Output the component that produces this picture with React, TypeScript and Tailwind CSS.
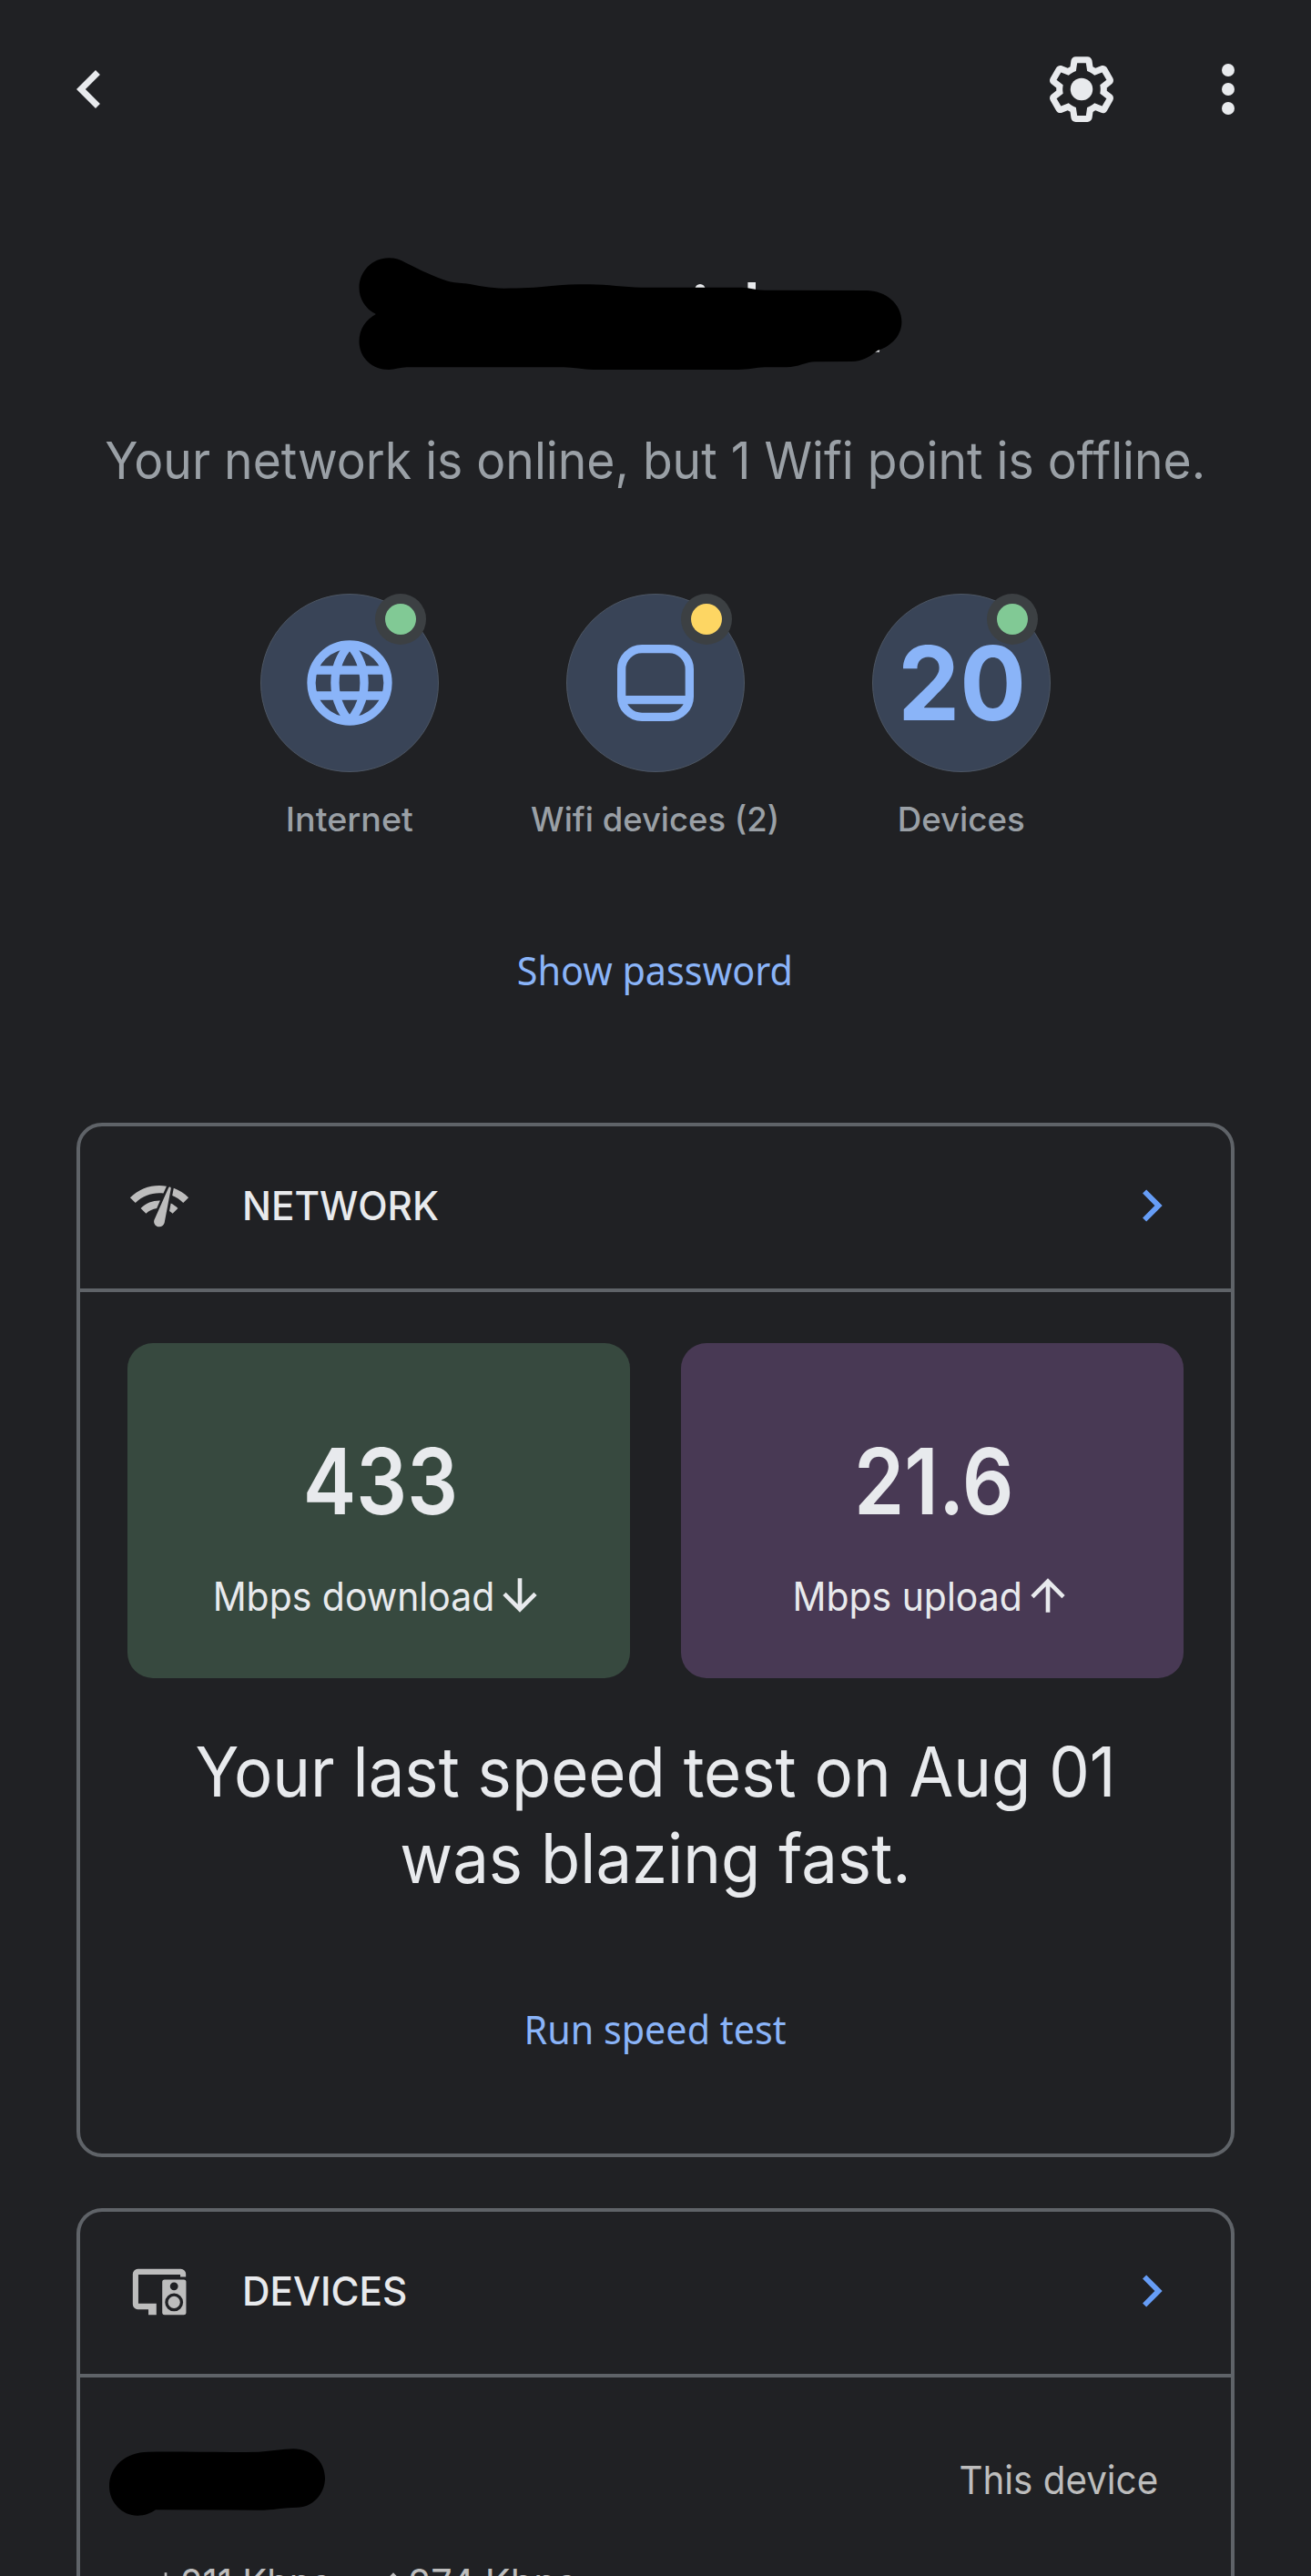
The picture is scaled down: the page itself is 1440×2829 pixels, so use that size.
import type { ReactNode } from "react";

function Icon({ className, children }: { className: string; children: ReactNode }) {
  return (
    <svg viewBox="0 0 24 24" fill="currentColor" className={`shrink-0 ${className}`}>
      {children}
    </svg>
  );
}

function BackIcon() {
  return (
    <Icon className="size-[84px] text-[#e8eaed]">
      <path d="M15.41 7.41 14 6l-6 6 6 6 1.41-1.41L10.83 12z" />
    </Icon>
  );
}

function ForwardIcon() {
  return (
    <Icon className="size-[70px] text-[#669df6]">
      <path d="M10 6 8.59 7.41 13.17 12l-4.58 4.59L10 18l6-6z" />
    </Icon>
  );
}

function GearIcon() {
  return (
    <Icon className="size-[84px] text-[#e8eaed]">
      <path d="M13.85 22.25h-3.7c-.74 0-1.36-.54-1.45-1.27l-.27-1.89c-.27-.14-.53-.29-.79-.46l-1.8.72c-.7.26-1.47-.03-1.81-.65L2.2 15.53c-.35-.66-.2-1.44.36-1.88l1.53-1.19c-.01-.15-.02-.3-.02-.46 0-.15.01-.31.02-.46l-1.52-1.19c-.59-.45-.74-1.26-.37-1.88l1.85-3.19c.34-.62 1.11-.9 1.79-.63l1.81.73c.26-.17.52-.32.78-.46l.27-1.91c.09-.7.71-1.25 1.44-1.25h3.7c.74 0 1.36.54 1.45 1.27l.27 1.89c.27.14.53.29.79.46l1.8-.72c.71-.26 1.48.03 1.82.65l1.84 3.18c.36.66.2 1.44-.36 1.88l-1.52 1.19c.01.15.02.3.02.46s-.01.31-.02.46l1.52 1.19c.56.45.72 1.23.37 1.86l-1.86 3.22c-.34.62-1.11.9-1.8.63l-1.8-.72c-.26.17-.52.32-.78.46l-.27 1.91c-.1.68-.72 1.22-1.46 1.22zm-3.23-2h2.76l.37-2.55.53-.22c.44-.18.88-.44 1.34-.78l.45-.34 2.38.96 1.38-2.4-2.03-1.58.07-.56c.03-.26.06-.51.06-.78s-.03-.53-.06-.78l-.07-.56 2.03-1.58-1.39-2.4-2.39.96-.45-.35c-.42-.32-.87-.58-1.33-.77l-.52-.22-.37-2.55h-2.76l-.37 2.55-.53.21c-.44.19-.88.44-1.34.79l-.45.33-2.38-.95-1.39 2.39 2.03 1.58-.07.56a7 7 0 0 0-.06.79c0 .26.02.53.06.78l.07.56-2.03 1.58 1.38 2.4 2.39-.96.45.35c.43.33.86.58 1.33.77l.53.22.38 2.55z" />
      <circle cx="12" cy="12" r="3.5" />
    </Icon>
  );
}

function MoreIcon() {
  return (
    <Icon className="size-[84px] text-[#e8eaed]">
      <circle cx="12" cy="6" r="2" />
      <circle cx="12" cy="12" r="2" />
      <circle cx="12" cy="18" r="2" />
    </Icon>
  );
}

function GlobeIcon() {
  return (
    <svg viewBox="0 0 24 24" fill="none" stroke="currentColor" strokeWidth="2" className="size-[112px]">
      <circle cx="12" cy="12" r="9" />
      <path d="M3.6 9h16.8M3.6 15h16.8" />
      <path d="M12 3A13.5 13.5 0 0 0 12 21M12 3A13.5 13.5 0 0 1 12 21" />
    </svg>
  );
}

function WifiPointIcon() {
  return (
    <svg viewBox="0 0 24 24" fill="none" stroke="currentColor" strokeWidth="2" className="size-[112px]">
      <rect x="4" y="4" width="16" height="16" rx="4.8" />
      <path d="M4 16h16" />
    </svg>
  );
}

function NetworkCheckIcon() {
  return (
    <Icon className="size-[70px] text-[#bdbdbd]">
      <path d="M15.9 5c-.17 0-.32.09-.41.23l-.07.15-5.18 11.65c-.16.29-.26.61-.26.96 0 1.11.9 2.01 2.01 2.01.96 0 1.77-.68 1.96-1.59l.01-.03L16.4 5.5c0-.28-.22-.5-.5-.5zM1 9l2 2c2.88-2.88 6.79-4.08 10.53-3.62l1.19-2.68C9.89 3.84 4.74 5.27 1 9zm20 2l2-2c-1.64-1.64-3.55-2.82-5.59-3.57l-.53 2.82c1.5.62 2.9 1.53 4.12 2.75zm-4 4l2-2c-.8-.8-1.7-1.42-2.66-1.89l-.55 2.92c.42.27.83.59 1.21.97zM5 13l2 2c1.13-1.13 2.56-1.79 4.03-2l1.28-2.88c-2.63-.08-5.3.87-7.31 2.88z" />
    </Icon>
  );
}

function SpeakerDisplayIcon() {
  return (
    <Icon className="size-[70px] text-[#bdbdbd]">
      <path d="M3.9 3.7h16.2A1.9 1.9 0 0 1 22 5.6v1.1h-2.1v-.9H4.1v10.9h6.8V21H7.9v-2.1h-4A1.9 1.9 0 0 1 2 17V5.6a1.9 1.9 0 0 1 1.9-1.9z" />
      <path
        fillRule="evenodd"
        d="M14 7.7h7.2a.9.9 0 0 1 .9.9v11.5a.9.9 0 0 1-.9.9H14a.9.9 0 0 1-.9-.9V8.6a.9.9 0 0 1 .9-.9zm3.55 1a1.52 1.52 0 1 0 0 3.04 1.52 1.52 0 0 0 0-3.04zm0 4.15a3.4 3.4 0 1 0 0 6.8 3.4 3.4 0 0 0 0-6.8z"
      />
      <circle cx="17.55" cy="16.25" r="2.25" />
    </Icon>
  );
}

function ArrowIcon({ up = false, className }: { up?: boolean; className: string }) {
  return (
    <Icon className={className}>
      <path
        d={
          up
            ? "M4 12l1.41 1.41L11 7.83V20h2V7.83l5.58 5.59L20 12l-8-8-8 8z"
            : "M20 12l-1.41-1.41L13 16.17V4h-2v12.17l-5.58-5.59L4 12l8 8 8-8z"
        }
      />
    </Icon>
  );
}

function Scribble() {
  return (
    <svg viewBox="370 276 640 140" className="mt-20 ml-[370px] h-[140px] w-[640px]">
      <circle cx="769" cy="317.5" r="5.5" fill="#e8eaed" />
      <path d="M821.4 310h8.6v12h-8.6z" fill="#e8eaed" />
      <path d="M956 388q5-3.5 10-2.500" stroke="#e8eaed" strokeWidth="2.5" fill="none" />
      <path
        d="M412.9 345C401 339 394.5 328 394.5 316C394.5 298 409 283.3 427 283.3C434 283.3 440 285 445.5 288.5C462 297 478 304 491 308.500C496 310.3 503 310.3 511 311.3C525 313.5 538 316.7 553.7 316.7C572 316.7 590 316 603 314.3C618 312.6 633 312.3 647.6 312.3C668 312.3 685 315.7 704.7 315.7L815 315.7C823 315.7 830 318.7 839.4 318.7L951.6 319C973 319 990.4 334 990.4 353.3C990.4 368 980 380 963.9 385C956 391 948 397 935.3 397L895 397.3C885 397.5 877 403.3 863.9 403.3L840 403.3C830 403.6 822 406 810.8 406L651.6 406C640 406 630 403.3 619 403.3L447 403.3C440 403.3 434 406 427 406C409 406 394.5 393 394.5 375C394.5 361 402 351 412.9 345Z"
        fill="#000"
      />
    </svg>
  );
}

function DeviceScribble() {
  return (
    <svg viewBox="116 2681 248 84" className="h-[84px] w-[248px]">
      <path
        d="M120 2730.5C120 2709 138 2692.7 162.6 2692.7C200 2692.2 245 2693.5 284.6 2692.7C298 2692 310 2689.3 322.5 2689.3C342 2689.3 357 2703 357 2721.7C357 2739 343 2753.7 326.7 2753.7C312 2754 299 2756.7 284.6 2756.7L171 2756.3C165 2760.5 159 2762.7 151.2 2762.7C134 2762.7 120 2748 120 2730.5Z"
        fill="#000"
      />
    </svg>
  );
}

function Status({ dot, label, labelClass, children }: { dot: string; label: string; labelClass: string; children: ReactNode }) {
  return (
    <div className="flex w-[196px] flex-col items-center">
      <div className="relative flex size-[196px] items-center justify-center rounded-full border border-[#4d5663] bg-[#394457] text-[#8ab4f8]">
        {children}
        <span className="absolute -top-px right-[13px] flex size-14 items-center justify-center rounded-full bg-[#3c4043]">
          <span className={`size-[34px] rounded-full ${dot}`} />
        </span>
      </div>
      <span className={`h-[102px] text-[37px] leading-[104px] font-medium whitespace-nowrap text-[#9aa0a6] ${labelClass}`}>{label}</span>
    </div>
  );
}

function CardHeader({ icon, title, titleClass }: { icon: ReactNode; title: string; titleClass: string }) {
  return (
    <div className="flex h-[182px] items-center border-b-4 border-[#5f6368] px-[52px] pb-1">
      {icon}
      <h2 className={`ml-[56px] grow origin-left pt-[2px] text-[43.5px] leading-none font-medium text-[#e8eaed] ${titleClass}`}>{title}</h2>
      <ForwardIcon />
    </div>
  );
}

function SpeedTile({ color, value, valueClass, label, labelClass, up = false }: {
  color: string; value: string; valueClass: string; label: string; labelClass: string; up?: boolean;
}) {
  return (
    <div className={`flex h-[368px] flex-1 flex-col items-center rounded-[28px] pt-[101px] pl-[3px] text-[#e8eaed] ${color}`}>
      <div className={`text-[101px] leading-[100px] font-semibold ${valueClass}`}>{value}</div>
      <div className="mt-[52px] flex h-12 items-center gap-[2px]">
        <span className={`flex justify-center pt-px text-[44px] whitespace-nowrap ${labelClass}`}>
          <span className="scale-x-[0.93]">{label}</span>
        </span>
        <ArrowIcon up={up} className="size-14" />
      </div>
    </div>
  );
}

export default function App() {
  return (
    <div className="h-[2829px] w-[1440px] overflow-hidden bg-[#202124] font-['Inter',sans-serif]">
      <header className="flex h-[196px] items-center pr-[49px] pl-14">
        <BackIcon />
        <div className="ml-auto flex gap-[77px]">
          <GearIcon />
          <MoreIcon />
        </div>
      </header>

      <Scribble />

      <p className="flex h-44 items-center justify-center pt-[3px]">
        <span className="scale-x-[0.954] text-[56px] whitespace-nowrap text-[#9aa0a6]">
          Your network is online, but 1 Wifi point is offline.
        </span>
      </p>

      <div className="mt-[60px] flex justify-center gap-[140px]">
        <Status dot="bg-[#81c995]" label="Internet" labelClass="scale-x-[1.018]">
          <GlobeIcon />
        </Status>
        <Status dot="bg-[#fdd663]" label="Wifi devices (2)" labelClass="scale-x-[0.985]">
          <WifiPointIcon />
        </Status>
        <Status dot="bg-[#81c995]" label="Devices" labelClass="scale-x-[0.99]">
          <span className="scale-x-[0.955] pl-[2px] text-[113px] leading-none font-bold">20</span>
        </Status>
      </div>

      <div className="flex h-[230px] items-center justify-center pr-[2px] font-['Noto_Sans',sans-serif] text-[44px] text-[#8ab4f8]">
        <span className="scale-x-[0.94]">Show password</span>
      </div>

      <section className="mx-[84px] mt-[53px] h-[1136px] rounded-[28px] border-4 border-[#5f6368]">
        <CardHeader icon={<NetworkCheckIcon />} title="NETWORK" titleClass="scale-x-[0.972]" />
        <div className="mt-14 flex gap-14 px-[52px]">
          <SpeedTile color="bg-[#37493f]" value="433" valueClass="scale-x-[0.87]" label="Mbps download" labelClass="w-[305px]" />
          <SpeedTile color="bg-[#483954]" value="21.6" valueClass="scale-x-[0.88]" label="Mbps upload" labelClass="w-[248px]" up />
        </div>
        <p className="mt-[55px] scale-x-[0.942] text-center text-[75px] leading-[95px] whitespace-nowrap text-[#e8eaed]">
          Your last speed test on Aug 01
          <br />
          was blazing fast.
        </p>
        <div className="flex h-[280px] items-center justify-center font-['Noto_Sans',sans-serif] text-[44px] text-[#8ab4f8]">
          <span className="scale-x-[0.938]">Run speed test</span>
        </div>
      </section>

      <section className="mx-[84px] mt-14 h-[440px] rounded-t-[28px] border-4 border-b-0 border-[#5f6368]">
        <CardHeader icon={<SpeakerDisplayIcon />} title="DEVICES" titleClass="scale-x-[0.972]" />
        <div className="mt-14 flex h-28 items-center justify-between pr-[80px] pl-7">
          <DeviceScribble />
          <span className="origin-right scale-x-[0.938] text-[43px] text-[#bdbdbd]">This device</span>
        </div>
        <div className="mt-[33px] flex h-12 items-center pl-[78px] text-[43px] leading-[48px] whitespace-nowrap text-[#bdbdbd]">
          <ArrowIcon className="size-8" />
          <span className="w-[218px] origin-left scale-x-[0.931]">211 Kbps</span>
          <ArrowIcon up className="size-8" />
          <span className="origin-left scale-x-[0.965]">274 Kbps</span>
        </div>
      </section>
    </div>
  );
}
